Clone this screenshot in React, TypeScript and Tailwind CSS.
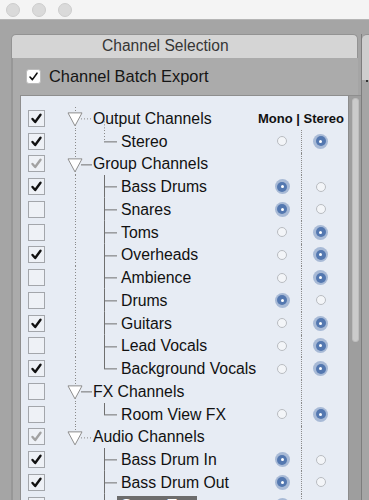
import React from 'react'

type Check = 'on' | 'off' | 'mixed'

interface Row {
  label: string
  level: 0 | 1
  check: Check
  radio?: 'm' | 's'
  link?: 'dot' | 'solid'
  kidsDot?: boolean
  vline?: 'dot' | 'solid'
  last?: boolean
  header?: boolean
  selected?: boolean
}

const rows: Row[] = [
  { label: 'Output Channels', level: 0, check: 'on', link: 'dot', kidsDot: true, header: true },
  { label: 'Stereo', level: 1, check: 'on', radio: 's', last: true, vline: 'dot' },
  { label: 'Group Channels', level: 0, check: 'mixed', link: 'solid' },
  { label: 'Bass Drums', level: 1, check: 'on', radio: 'm' },
  { label: 'Snares', level: 1, check: 'off', radio: 'm' },
  { label: 'Toms', level: 1, check: 'off', radio: 's' },
  { label: 'Overheads', level: 1, check: 'on', radio: 's' },
  { label: 'Ambience', level: 1, check: 'off', radio: 's' },
  { label: 'Drums', level: 1, check: 'off', radio: 'm' },
  { label: 'Guitars', level: 1, check: 'on', radio: 's' },
  { label: 'Lead Vocals', level: 1, check: 'off', radio: 's' },
  { label: 'Background Vocals', level: 1, check: 'on', radio: 's', last: true },
  { label: 'FX Channels', level: 0, check: 'off', link: 'solid' },
  { label: 'Room View FX', level: 1, check: 'off', radio: 's', last: true },
  { label: 'Audio Channels', level: 0, check: 'mixed', link: 'dot' },
  { label: 'Bass Drum In', level: 1, check: 'on', radio: 'm' },
  { label: 'Bass Drum Out', level: 1, check: 'on', radio: 'm' },
  { label: 'Snare Top', level: 1, check: 'off', radio: 'm', selected: true },
]

const H = 22.75
const LAST_ROOT = 14

const CheckBox = ({ state }: { state: Check }) => (
  <div className="w-[17px] h-[17px] shrink-0 border border-[#a3a6ab] bg-[#eef1f6] flex items-center justify-center">
    {state !== 'off' && (
      <svg width="13" height="13" viewBox="0 0 13 13">
        <path
          d="M2.5 7 L5.2 10 L10.5 2.8"
          fill="none"
          stroke={state === 'on' ? '#111' : '#a2a2a2'}
          strokeWidth="2.4"
          strokeLinecap="round"
          strokeLinejoin="round"
        />
      </svg>
    )}
  </div>
)

const Radio = ({ on }: { on: boolean }) =>
  on ? (
    <div className="w-[15px] h-[15px] rounded-full bg-[#a8bad6] flex items-center justify-center">
      <div className="w-[10px] h-[10px] rounded-full bg-[#5478b0] flex items-center justify-center">
        <div className="w-[3px] h-[3px] rounded-full bg-white" />
      </div>
    </div>
  ) : (
    <div className="w-[10px] h-[10px] rounded-full border border-[#b9bcc1] bg-[#f3f5f8]" />
  )

function Tree({ r, i }: { r: Row; i: number }) {
  const c = H / 2
  const w = r.level === 0 ? 33 : 57
  const dot = '1 2'
  return (
    <svg width={w} height={H} overflow="visible" className="shrink-0">
      {i <= LAST_ROOT && (
        <line x1="15.5" y1="0" x2="15.5" y2={i === LAST_ROOT ? c : H} stroke="#8a8a8a" strokeDasharray={dot} />
      )}
      {r.level === 0 && (
        <>
          {r.kidsDot && (
            <line x1="44.5" y1={c + 3} x2="44.5" y2={H} stroke="#8a8a8a" strokeDasharray={dot} />
          )}
          <line
            x1="21"
            y1={c + 0.5}
            x2="32"
            y2={c + 0.5}
            stroke={r.link === 'dot' ? '#8a8a8a' : '#6f6f6f'}
            strokeDasharray={r.link === 'dot' ? dot : undefined}
          />
          <polygon
            points={`8,${c - 5.5} 22,${c - 5.5} 15,${c + 7.5}`}
            fill="#ffffff"
            stroke="#8e8e8e"
            strokeWidth="1"
          />
        </>
      )}
      {r.level === 1 && (
        <>
          <line
            x1="44.5"
            y1="0"
            x2="44.5"
            y2={r.last ? c + 0.5 : H}
            stroke={r.vline === 'dot' ? '#8a8a8a' : '#6f6f6f'}
            strokeDasharray={r.vline === 'dot' ? dot : undefined}
          />
          <line x1="44" y1={c + 0.5} x2="57" y2={c + 0.5} stroke="#6f6f6f" />
        </>
      )}
    </svg>
  )
}

export default function App() {
  return (
    <div className="w-[369px] h-[500px] overflow-hidden bg-[#a5a5a5] font-['Liberation_Sans',Arial,sans-serif]">
      {/* title bar */}
      <div className="h-[20px] bg-[#f4f4f4] border-b border-[#b5b5b5] flex items-center pl-[6px] gap-[12px]">
        <div className="w-[14px] h-[14px] rounded-full bg-[#dadada] border border-[#cdcdcd]" />
        <div className="w-[14px] h-[14px] rounded-full bg-[#dadada] border border-[#cdcdcd]" />
        <div className="w-[14px] h-[14px] rounded-full bg-[#dadada] border border-[#cdcdcd]" />
      </div>

      <div className="flex pt-[14px] pl-[11px]">
        {/* left panel */}
        <div className="w-[349px] shrink-0 flex flex-col">
          <div className="w-[347px] h-[24px] bg-[#d5d5d5] rounded-t-[5px] border-t border-x border-[#939393] pl-[90px] text-[15.6px] leading-[22px] text-[#363636]">
            Channel Selection
          </div>
          <div className="w-[347px] bg-[#ababab] border-l-2 border-[#979797] flex items-center h-[37px] pl-[13px] gap-[8px]">
            <div className="w-[15px] h-[15px] rounded-[3px] bg-white border border-[#bdbdbd] flex items-center justify-center">
              <svg width="11" height="11" viewBox="0 0 11 11">
                <path d="M2 6 L4.4 8.6 L9 2.2" fill="none" stroke="#111" strokeWidth="1.6" strokeLinecap="round" strokeLinejoin="round" />
              </svg>
            </div>
            <span className="text-[16.4px] text-[#151515]">Channel Batch Export</span>
          </div>

          {/* list */}
          <div className="flex bg-[#ababab] border-l-2 border-[#979797] pl-[7px]">
            <div className="flex border-t border-l border-[#8e8e8e] h-[420px]">
              <div className="w-[327px] bg-[#e7ecf4] pt-[11px] flex flex-col">
                {rows.map((r, i) => (
                  <div key={r.label} className="flex items-center shrink-0" style={{ height: H }}>
                    <div className="ml-[7px] mr-[15px]">
                      <CheckBox state={r.check} />
                    </div>
                    <Tree r={r} i={i} />
                    <div className="flex-1 min-w-0 flex items-center">
                      <span
                        className={`text-[15.8px] leading-[19px] whitespace-nowrap ${r.level === 1 ? 'px-[4px]' : ''} ${
                          r.selected ? 'bg-[#6c6c6c] text-white' : 'text-[#111]'
                        }`}
                      >
                        {r.label}
                      </span>
                    </div>
                    {r.header ? (
                      <span className="pr-[4px] text-[13px] font-bold text-[#111] whitespace-nowrap">Mono | Stereo</span>
                    ) : (
                      <div className="flex h-full pr-[9px]">
                        <div className="w-[38px] flex items-center justify-center">
                          {r.radio && <Radio on={r.radio === 'm'} />}
                        </div>
                        <div className="w-[38px] flex items-center justify-center border-l border-dotted border-[#8c8c8c]">
                          {r.radio && <Radio on={r.radio === 's'} />}
                        </div>
                      </div>
                    )}
                  </div>
                ))}
              </div>
              {/* scrollbar */}
              <div className="w-[13px] bg-[#9e9e9e] border-l border-[#8c8c8c] pl-[3px] pt-[2px]">
                <div className="w-[7px] h-[244px] rounded-[3px] bg-[#cbcbcb] border border-[#bdbdbd]" />
              </div>
            </div>
          </div>
        </div>

        {/* right panel sliver */}
        <div className="flex-1 ml-[1px] border-l border-[#7d7d7d] flex flex-col">
          <div className="h-[46px] bg-[#cecece] border-t border-[#939393] rounded-tl-[5px]" />
          <div className="h-[2px] flex justify-end pr-[1px]">
            <div className="w-[2px] h-[2px] bg-[#333]" />
          </div>
        </div>
      </div>
    </div>
  )
}
